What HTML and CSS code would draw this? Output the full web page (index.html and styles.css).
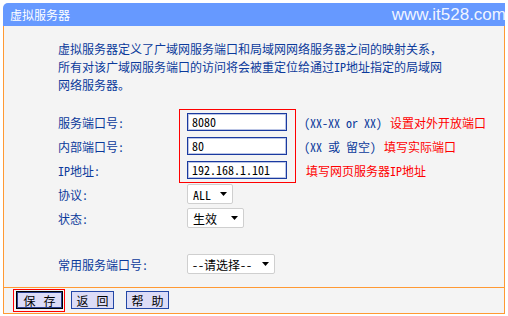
FILE: index.html
```html
<!DOCTYPE html>
<html lang="zh-CN">
<head>
<meta charset="utf-8">
<title>虚拟服务器</title>
<link rel="stylesheet" href="styles.css">
</head>
<body>
<div class="panel">
  <div class="head">
    <span class="title">虚拟服务器</span>
    <span class="site">www.it528.com</span>
  </div>
  <div class="content">
    <p class="intro">虚拟服务器定义了广域网服务端口和局域网网络服务器之间的映射关系，<br>所有对该广域网服务端口的访问将会被重定位给通过IP地址指定的局域网<br>网络服务器。</p>
    <div class="form">
      <div class="mark"></div>
      <div class="row">
        <span class="label">服务端口号:</span>
        <span class="input">8080</span>
        <span class="hint">(XX-XX or XX)</span>
        <span class="note">设置对外开放端口</span>
      </div>
      <div class="row">
        <span class="label">内部端口号:</span>
        <span class="input">80</span>
        <span class="hint">(XX 或 留空)</span>
        <span class="note">填写实际端口</span>
      </div>
      <div class="row">
        <span class="label">IP地址:</span>
        <span class="input">192.168.1.101</span>
        <span class="note solo">填写网页服务器IP地址</span>
      </div>
      <div class="row">
        <span class="label">协议:</span>
        <span class="select w-all"><span>ALL</span><svg class="arrow" width="7" height="4" viewBox="0 0 7 4"><polygon points="0,0 7,0 3.5,4" fill="#000"/></svg></span>
      </div>
      <div class="row">
        <span class="label">状态:</span>
        <span class="select w-state"><span>生效</span><svg class="arrow" width="7" height="4" viewBox="0 0 7 4"><polygon points="0,0 7,0 3.5,4" fill="#000"/></svg></span>
      </div>
      <div class="row gap">
        <span class="label">常用服务端口号:</span>
        <span class="select w-common"><span>--请选择--</span><svg class="arrow" width="7" height="4" viewBox="0 0 7 4"><polygon points="0,0 7,0 3.5,4" fill="#000"/></svg></span>
      </div>
    </div>
  </div>
  <div class="foot">
    <div class="mark-save"></div>
    <span class="btn save">保 存</span>
    <span class="btn back">返 回</span>
    <span class="btn help">帮 助</span>
  </div>
</div>
</body>
</html>
```

FILE: styles.css
```css
* { box-sizing: border-box; }
html, body { margin: 0; padding: 0; background: #ffffff; }
body {
  font-family: "Noto Sans Mono CJK SC", "Noto Sans CJK SC", sans-serif;
  font-size: 12px;
}
.panel {
  margin: 3px 0 0 3px;
  width: 502px;
}
.head {
  height: 23px;
  background: #6699ff;
  border-top-left-radius: 5px;
  display: flex;
  align-items: center;
  justify-content: space-between;
  padding-left: 7px;
  color: #ffffff;
}
.title { font-size: 12px; line-height: 23px; }
.site {
  font-family: "Liberation Sans", Arial, sans-serif;
  font-size: 17px;
  color: rgba(255, 255, 255, 0.92);
  margin-right: -1px;
}
.content {
  background: #f4f4f4;
  border-left: 1px solid #ff9933;
  border-right: 1px solid #ff9933;
  padding: 14px 0 11px 54px;
}
.intro {
  margin: 0;
  line-height: 18px;
  color: #0b3a9b;
  white-space: nowrap;
}
.form {
  position: relative;
  margin-top: 16px;
}
.mark {
  position: absolute;
  left: 121px;
  top: -1px;
  width: 117px;
  height: 74px;
  border: 1px solid #ff0000;
}
.row {
  display: flex;
  align-items: center;
  height: 24px;
  white-space: nowrap;
}
.row.gap { margin-top: 22px; }
.label {
  width: 129px;
  flex: none;
  color: #0b3a9b;
}
.input {
  width: 100px;
  height: 18px;
  flex: none;
  background: #ffffff;
  border: 1px solid #1a3aa0;
  box-shadow: inset 0 0 0 1px rgba(60, 90, 180, 0.35);
  padding-left: 4px;
  line-height: 16px;
  color: #000000;
  position: relative;
}
.hint {
  margin-left: 17px;
  color: #0b3a9b;
}
.note {
  margin-left: 8px;
  color: #ff0000;
}
.note.solo { margin-left: 19px; }
.select {
  height: 20px;
  flex: none;
  display: flex;
  align-items: center;
  justify-content: space-between;
  padding: 0 5px 0 5px;
  background: #ffffff;
  border: 1px solid #cfcfcf;
  border-radius: 2px;
  color: #000000;
}
.arrow { flex: none; }
.w-all { width: 46px; }
.w-state { width: 57px; }
.w-common { width: 88px; padding-left: 4px; }
.foot {
  position: relative;
  height: 27px;
  background: #f4f4f4;
  border: 1px solid #ff9933;
  padding: 3px 0 0 12px;
  display: flex;
  align-items: flex-start;
}
.mark-save {
  position: absolute;
  left: 9px;
  top: 1px;
  width: 52px;
  height: 23px;
  border: 1px solid #ff0000;
}
.btn {
  height: 18px;
  width: 43px;
  display: flex;
  align-items: center;
  justify-content: center;
  background: #dcdcf7;
  border: 1px solid #2346a6;
  color: #000000;
  font-size: 12px;
  word-spacing: 2px;
}
.btn.save {
  width: 47px;
  border: 1px solid #000000;
  box-shadow: inset 0 0 0 1px #2a3f8f;
}
.btn.back { margin-left: 8px; }
.btn.help { margin-left: 12px; }
```
